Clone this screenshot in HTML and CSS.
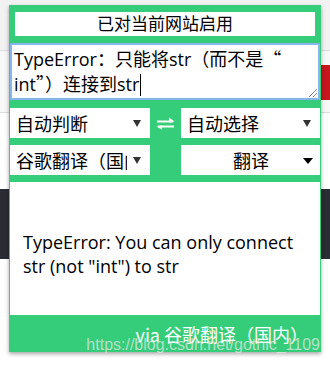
FILE: index.html
```html
<!DOCTYPE html>
<html lang="zh-CN">
<head>
<meta charset="utf-8">
<title>Translate popup</title>
<link rel="stylesheet" href="styles.css">
</head>
<body>
<div class="page">
  <div class="bg-top"></div>
  <div class="bg-mid"></div>
  <div class="bg-white"></div>
  <div class="bg-dark"></div>
  <div class="bg-rest"></div>
</div>
<div class="popup">
  <div class="status">已对当前网站启用</div>
  <div class="source" role="textbox" aria-multiline="true">TypeError：只能将str（而不是<span class="cjk">“</span><br>int<span class="cjk">”</span>）连接到str<span class="caret"></span>
    <svg class="grip" width="9" height="9" viewBox="0 0 9 9" aria-hidden="true">
      <path d="M1 9L9 1M5 9L9 5" stroke="#8a8a8a" stroke-width="1" fill="none"/>
    </svg>
  </div>
  <div class="controls">
    <div class="sel"><span class="sel-text">自动判断</span><span class="arrow"></span></div>
    <div class="swap">
      <svg width="19" height="13" viewBox="0 0 19 13" aria-hidden="true">
        <path d="M1 4.5H17" stroke="#fff" stroke-width="2" fill="none"/>
        <path d="M18.5 4.5L13 0.5V5.5Z" fill="#fff"/>
        <path d="M2 9.5H18" stroke="#fff" stroke-width="2" fill="none"/>
        <path d="M0.5 9.5L6 12.5V8.5Z" fill="#fff"/>
      </svg>
    </div>
    <div class="sel"><span class="sel-text">自动选择</span><span class="arrow"></span></div>
    <div class="sel"><span class="sel-text">谷歌翻译（国内）</span><span class="arrow"></span></div>
    <div></div>
    <div class="sel sel-center"><span class="sel-text">翻译</span><span class="arrow arrow-big"></span></div>
  </div>
  <div class="result">TypeError: You can only connect str (not "int") to str</div>
  <div class="footer">via 谷歌翻译（国内）</div>
</div>
<div class="watermark">https://blog.csdn.net/gothic_1109</div>
</body>
</html>
```

FILE: styles.css
```css
html, body {
  margin: 0;
  padding: 0;
}
body {
  width: 330px;
  height: 366px;
  overflow: hidden;
  position: relative;
  font-family: "Open Sans", "Noto Sans CJK SC", sans-serif;
  background: #fff;
}
.page {
  display: flex;
  flex-direction: column;
  height: 366px;
}
.bg-top {
  height: 50px;
  background: #f2f2f2;
  border-bottom: 1px solid #dcdcdc;
}
.bg-mid {
  height: 61px;
  background: linear-gradient(#c8161e, #c8161e) no-repeat right 0 top 14px / 9px 35px, #f8f8f8;
  border-bottom: 1px solid #dcdcdc;
}
.bg-white {
  height: 76px;
  background: #fff;
}
.bg-dark {
  height: 70px;
  background: #2a2c33;
}
.bg-rest {
  flex: 1;
  background: #fff;
}
.popup {
  position: absolute;
  left: 9px;
  top: 5px;
  width: 312px;
  height: 347px;
  box-sizing: border-box;
  background: #35cd79;
  padding: 7px 1px 0;
  display: flex;
  flex-direction: column;
  box-shadow: 0 2px 4px rgba(0, 0, 0, 0.35);
}
.status {
  margin: 0 5px;
  height: 24px;
  background: #fff;
  color: #000;
  font-size: 17px;
  line-height: 24px;
  text-align: center;
}
.source {
  position: relative;
  margin-top: 7px;
  height: 57px;
  box-sizing: border-box;
  border: 2px solid #86b6ec;
  background: #fff;
  padding: 1px 2px;
  font-size: 18px;
  line-height: 24px;
  color: #000;
  white-space: nowrap;
  overflow: hidden;
}
.cjk {
  font-family: "Noto Sans CJK SC", sans-serif;
}
.caret {
  display: inline-block;
  width: 1px;
  height: 22px;
  background: #000;
  vertical-align: -5px;
  margin-left: 1px;
}
.grip {
  position: absolute;
  right: 1px;
  bottom: 1px;
}
.controls {
  margin-top: 8px;
  display: grid;
  grid-template-columns: 140px 31px 139px;
  grid-auto-rows: 30px;
  row-gap: 7px;
}
.sel {
  background: #fff;
  display: flex;
  align-items: center;
  padding-left: 6px;
  position: relative;
  font-size: 18px;
  color: #000;
}
.sel-text {
  width: 111px;
  white-space: nowrap;
  overflow: hidden;
}
.sel-center .sel-text {
  width: 128px;
  text-align: center;
}
.arrow {
  position: absolute;
  right: 9px;
  top: 12px;
  width: 0;
  height: 0;
  border-left: 4px solid transparent;
  border-right: 4px solid transparent;
  border-top: 7px solid #333;
}
.arrow-big {
  right: 7px;
  top: 13px;
  border-left: 5.5px solid transparent;
  border-right: 5.5px solid transparent;
  border-top: 6px solid #000;
}
.swap {
  display: flex;
  align-items: center;
  justify-content: center;
  padding-top: 1px;
}
.result {
  margin-top: 7px;
  height: 133px;
  box-sizing: border-box;
  background: #fff;
  padding: 48px 13px 0;
  font-size: 18px;
  line-height: 24px;
  color: #000;
}
.footer {
  flex: 1;
  color: #fff;
  font-size: 18px;
  text-align: right;
  padding: 6px 12px 0 0;
  font-family: "Noto Sans CJK SC", "Open Sans", sans-serif;
}
.watermark {
  position: absolute;
  right: 10px;
  top: 336px;
  font-family: "Liberation Sans", Arial, sans-serif;
  font-size: 16px;
  color: rgba(235, 235, 235, 0.7);
}
```
